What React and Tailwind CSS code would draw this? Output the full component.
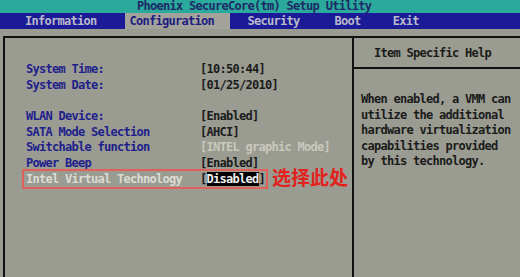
const mono = { fontFamily: '"DejaVu Sans Mono", "Liberation Mono", monospace' };

const rows = [
  { label: "System Time:", value: "[10:50:44]" },
  { label: "System Date:", value: "[01/25/2010]" },
  null,
  { label: "WLAN Device:", value: "[Enabled]" },
  { label: "SATA Mode Selection", value: "[AHCI]" },
  { label: "Switchable function", value: "[INTEL graphic Mode]", dim: true },
  { label: "Power Beep", value: "[Enabled]" },
];

export default function App() {
  return (
    <div
      className="w-[520px] h-[277px] overflow-hidden bg-[#9a9b91] text-[12px] tracking-[-0.72px] font-bold flex flex-col"
      style={mono}
    >
      {/* title */}
      <div className="h-[13px] bg-[#2aa99c] text-[#1d2a66] leading-[13px] pl-[137px] whitespace-pre">
        Phoenix SecureCore(tm) Setup Utility
      </div>

      {/* menu */}
      <div className="h-[16px] bg-[#1b1b97] flex items-center leading-[16px] text-[#b9b9cc] pl-[25px] whitespace-pre">
        <span>Information</span>
        <span className="ml-[28px] w-[105px] pl-[5px] h-full bg-[#a3a39b] text-[#1d1d80]">Configuration</span>
        <span className="ml-[18px]">Security</span>
        <span className="ml-[35px]">Boot</span>
        <span className="ml-[32px]">Exit</span>
      </div>

      {/* body */}
      <div className="flex-1 pt-[7px] pl-[3px]">
        <div className="h-full flex border-t-2 border-l-2 border-[#111]">
          {/* left */}
          <div className="w-[347px] pt-[24px] pl-[21px] leading-[15.7px] whitespace-pre">
            {rows.map((r, i) =>
              r ? (
                <div key={i} className="flex h-[15.7px]">
                  <span className="w-[174px] text-[#1f1f8c]">{r.label}</span>
                  <span className={r.dim ? "text-[#c9c9bf]" : "text-[#1b1b1b]"}>{r.value}</span>
                </div>
              ) : (
                <div key={i} className="h-[15.7px]" />
              )
            )}
            <div className="relative flex h-[15.7px]">
              <span className="w-[174px] text-[#dcdcd4]">Intel Virtual Technology</span>
              <span className="text-[#1b1b1b]">
                [<span className="bg-black text-[#f0f0f0]">Disabled</span>]
              </span>
              <div className="absolute left-[-4px] top-[-3px] w-[246px] h-[20px] border-2 border-[#e0605a]" />
              <span
                className="absolute left-[246px] top-[-7px] text-[19px] tracking-normal leading-[24px] font-bold text-[#e3211c] whitespace-nowrap"
                style={{ fontFamily: '"Noto Sans CJK SC", sans-serif' }}
              >
                选择此处
              </span>
            </div>
          </div>

          {/* right */}
          <div className="flex-1 border-l-2 border-[#111] flex flex-col">
            <div className="h-[31px] border-b-2 border-[#111] flex items-center pl-[20px] text-[#1b1b1b] whitespace-pre">
              Item Specific Help
            </div>
            <div className="pt-[23px] pl-[7px] leading-[15.6px] text-[#1b1b1b] whitespace-pre">
              <div>When enabled, a VMM can</div>
              <div>utilize the additional</div>
              <div>hardware virtualization</div>
              <div>capabilities provided</div>
              <div>by this technology.</div>
            </div>
          </div>
        </div>
      </div>
    </div>
  );
}
